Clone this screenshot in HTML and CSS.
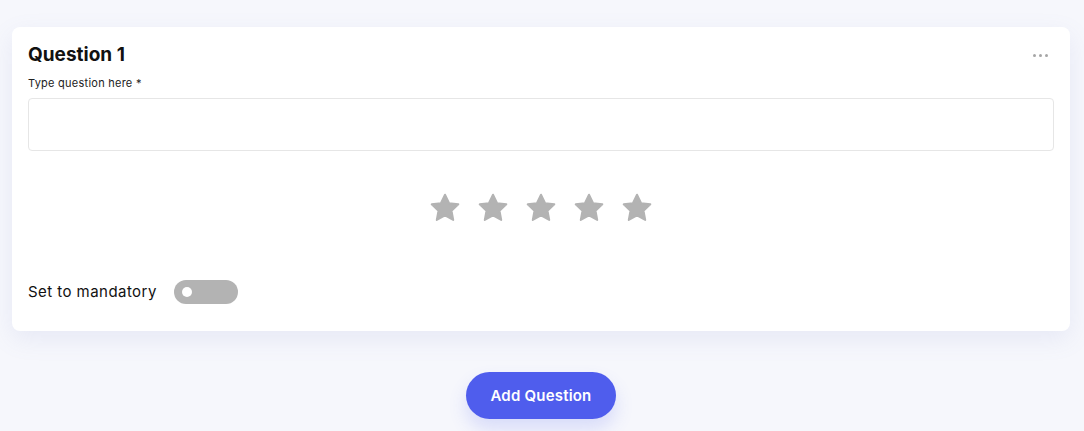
FILE: index.html
```html
<!DOCTYPE html>
<html lang="en">
<head>
  <meta charset="UTF-8" />
  <meta name="viewport" content="width=device-width, initial-scale=1.0"/>
  <title>Question Builder</title>
  <link rel="stylesheet" href="styles.css">
</head>
<body>
  <div class="question-card">
    <div class="card-head">
      <h2>Question 1</h2>
      <button class="more-btn" aria-label="More">
        <span></span><span></span><span></span>
      </button>
    </div>
    <label class="field-label" for="question">Type question here *</label>
    <input type="text" id="question" class="question-input">

    <div class="stars">
      <svg viewBox="0 0 24 24"><path d="M12 2.6l2.9 6 6.5.8-4.8 4.5 1.2 6.5L12 17.2l-5.8 3.2 1.2-6.5-4.8-4.5 6.5-.8z"/></svg>
      <svg viewBox="0 0 24 24"><path d="M12 2.6l2.9 6 6.5.8-4.8 4.5 1.2 6.5L12 17.2l-5.8 3.2 1.2-6.5-4.8-4.5 6.5-.8z"/></svg>
      <svg viewBox="0 0 24 24"><path d="M12 2.6l2.9 6 6.5.8-4.8 4.5 1.2 6.5L12 17.2l-5.8 3.2 1.2-6.5-4.8-4.5 6.5-.8z"/></svg>
      <svg viewBox="0 0 24 24"><path d="M12 2.6l2.9 6 6.5.8-4.8 4.5 1.2 6.5L12 17.2l-5.8 3.2 1.2-6.5-4.8-4.5 6.5-.8z"/></svg>
      <svg viewBox="0 0 24 24"><path d="M12 2.6l2.9 6 6.5.8-4.8 4.5 1.2 6.5L12 17.2l-5.8 3.2 1.2-6.5-4.8-4.5 6.5-.8z"/></svg>
    </div>

    <div class="mandatory">
      <span>Set to mandatory</span>
      <label class="switch">
        <input type="checkbox">
        <span class="slider"></span>
      </label>
    </div>
  </div>

  <div class="actions">
    <button class="add-btn">Add Question</button>
  </div>
</body>
</html>
```

FILE: styles.css
```css
body {
  margin: 0;
  padding: 27px 14px 0 12px;
  font-family: "Inter", "Lato", sans-serif;
  background: #f6f7fc;
  color: #111;
  height: 404px;
  overflow: hidden;
}
.question-card {
  background: #fff;
  border-radius: 8px;
  padding: 16px 16px 27px;
  box-shadow: 0 8px 24px rgba(120, 130, 200, 0.12);
}
.card-head {
  display: flex;
  justify-content: space-between;
  align-items: center;
}
.card-head h2 {
  margin: 0;
  font-size: 19px;
  font-weight: 700;
  line-height: 24px;
}
.more-btn {
  display: flex;
  gap: 3px;
  background: none;
  border: none;
  padding: 0 6px 0 0;
  cursor: pointer;
}
.more-btn span {
  width: 3px;
  height: 3px;
  border-radius: 50%;
  background: #a6a6a6;
}
.field-label {
  display: block;
  margin-top: 8px;
  font-size: 11px;
  line-height: 16px;
  letter-spacing: 0.25px;
  color: #222;
}
.question-input {
  display: block;
  box-sizing: border-box;
  width: 100%;
  height: 53px;
  margin-top: 7px;
  border: 1px solid #e6e6e6;
  border-radius: 4px;
}
.stars {
  display: flex;
  justify-content: center;
  gap: 14px;
  margin-top: 40px;
}
.stars svg {
  width: 34px;
  height: 34px;
  fill: #b3b3b3;
  stroke: #b3b3b3;
  stroke-width: 1.4;
  stroke-linejoin: round;
}
.mandatory {
  display: flex;
  align-items: center;
  gap: 17px;
  margin-top: 55px;
  font-size: 15px;
  line-height: 24px;
  letter-spacing: 0.45px;
}
.switch input {
  display: none;
}
.slider {
  display: block;
  position: relative;
  width: 64px;
  height: 24px;
  border-radius: 12px;
  background: #b3b3b3;
}
.slider::before {
  content: "";
  position: absolute;
  left: 8px;
  top: 7px;
  width: 10px;
  height: 10px;
  border-radius: 50%;
  background: #fff;
}
.actions {
  display: flex;
  justify-content: center;
  margin-top: 41px;
}
.add-btn {
  width: 150px;
  height: 47px;
  border: none;
  border-radius: 24px;
  background: #4f5ded;
  color: #fff;
  font-family: inherit;
  font-size: 15px;
  font-weight: 600;
  letter-spacing: 0.2px;
  cursor: pointer;
  box-shadow: 0 10px 18px rgba(79, 93, 237, 0.18);
}
```
